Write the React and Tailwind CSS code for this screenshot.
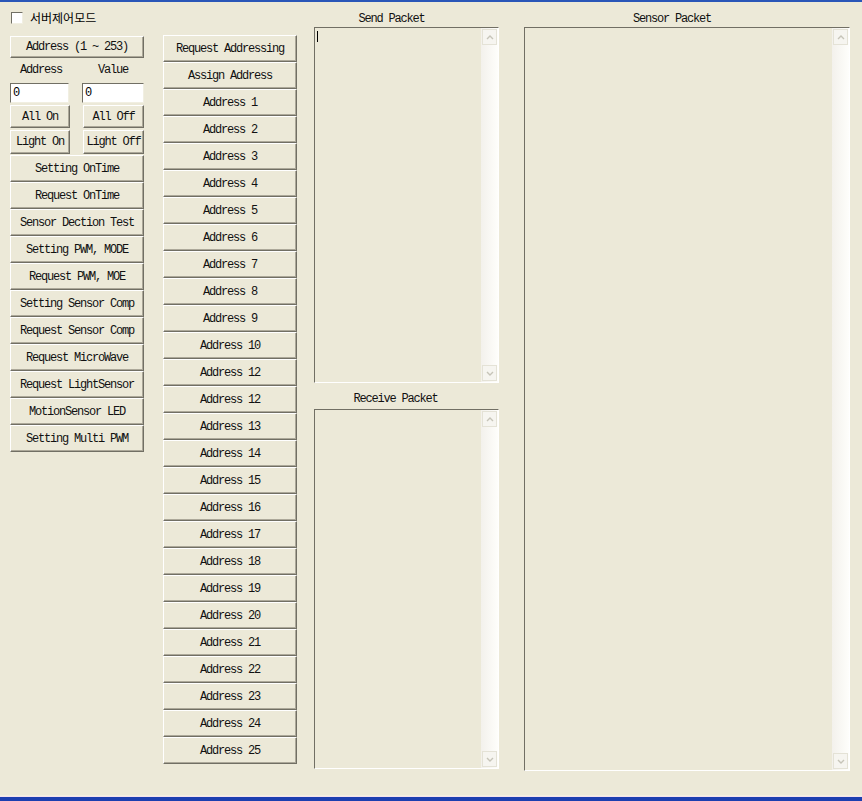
import React from "react";

const font = { fontFamily: '"Liberation Mono", "DejaVu Sans Mono", monospace' };

const Btn = ({ label, h = "h-[27px]", w = "w-full" }) => (
  <button
    className={`${w} ${h} flex items-center justify-center bg-[#ECE9D8] border border-t-white border-l-white border-b-[#716F64] border-r-[#716F64] shadow-[inset_-1px_-1px_0_#ACA899] text-[12px] tracking-[-1.2px] text-[#111] leading-none`}
    style={font}
  >
    {label}
  </button>
);

const Arrow = ({ up }) => (
  <div className="h-[16px] mx-[1px] flex items-center justify-center border border-[#E4E2D6] bg-[#F6F5F0]">
    <svg width="8" height="5" viewBox="0 0 8 5">
      <path
        d={up ? "M1 4 L4 1 L7 4" : "M1 1 L4 4 L7 1"}
        fill="none"
        stroke="#C6C4B8"
        strokeWidth="1.4"
      />
    </svg>
  </div>
);

const ScrollBar = () => (
  <div className="w-[17px] h-full flex flex-col py-[1px] bg-gradient-to-r from-[#F3F1EC] to-[#FEFEFB]">
    <Arrow up />
    <div className="flex-1" />
    <Arrow />
  </div>
);

const TextBox = ({ h, caret }) => (
  <div
    className={`${h} w-full flex border border-t-[#716F64] border-l-[#716F64] border-b-white border-r-white bg-[#ECE9D8]`}
  >
    <div className="flex-1 relative">
      {caret && <div className="absolute left-[2px] top-[3px] w-[1px] h-[11px] bg-black" />}
    </div>
    <ScrollBar />
  </div>
);

const Label = ({ children, className = "" }) => (
  <div
    className={`text-[12px] tracking-[-1.2px] text-[#111] leading-none text-center ${className}`}
    style={font}
  >
    {children}
  </div>
);

const Input = ({ w }) => (
  <div
    className={`${w} h-[20px] bg-white border border-t-[#716F64] border-l-[#716F64] border-b-[#F1EFE2] border-r-[#F1EFE2] flex items-center pl-[2px] text-[12px] leading-none text-black`}
    style={font}
  >
    0
  </div>
);

const App = () => {
  const leftButtons = [
    "Setting OnTime",
    "Request OnTime",
    "Sensor Dection Test",
    "Setting PWM, MODE",
    "Request PWM, MOE",
    "Setting Sensor Comp",
    "Request Sensor Comp",
    "Request MicroWave",
    "Request LightSensor",
    "MotionSensor LED",
    "Setting Multi PWM",
  ];
  const addrNums = [1, 2, 3, 4, 5, 6, 7, 8, 9, 10, 12, 12, 13, 14, 15, 16, 17, 18, 19, 20, 21, 22, 23, 24, 25];

  return (
    <div className="w-[862px] h-[801px] bg-[#ECE9D8] flex flex-col overflow-hidden">
      <div className="h-[2px] bg-[#2A56B8]" />
      <div className="flex-1 flex pl-[10px]">
        {/* left column */}
        <div className="w-[134px] flex flex-col">
          <div className="flex items-center gap-[7px] mt-[10px] ml-[1px] h-[12px]">
            <div className="w-[12px] h-[12px] bg-white border border-t-[#716F64] border-l-[#716F64] border-b-[#F1EFE2] border-r-[#F1EFE2]" />
            <span
              className="text-[12px] leading-none text-black"
              style={{ fontFamily: '"Noto Sans CJK KR", "Noto Sans", sans-serif' }}
            >
              서버제어모드
            </span>
          </div>
          <div className="mt-[12px]">
            <Btn label="Address (1 ~ 253)" h="h-[22px]" />
          </div>
          <div className="flex justify-between mt-[6px] h-[12px]">
            <Label className="w-[62px]">Address</Label>
            <Label className="w-[62px]">Value</Label>
          </div>
          <div className="flex justify-between mt-[7px]">
            <Input w="w-[59px]" />
            <Input w="w-[62px]" />
          </div>
          <div className="flex justify-between mt-[2px]">
            <Btn label="All On" h="h-[23px]" w="w-[60px]" />
            <Btn label="All Off" h="h-[23px]" w="w-[61px]" />
          </div>
          <div className="flex justify-between mt-[2px]">
            <Btn label="Light On" h="h-[24px]" w="w-[60px]" />
            <Btn label="Light Off" h="h-[24px]" w="w-[61px]" />
          </div>
          <div className="flex flex-col mt-[1px]">
            {leftButtons.map((b) => (
              <Btn key={b} label={b} />
            ))}
          </div>
        </div>

        {/* middle column */}
        <div className="w-[134px] ml-[19px] flex flex-col pt-[33px]">
          <Btn label="Request Addressing" />
          <Btn label="Assign Address" />
          {addrNums.map((n, i) => (
            <Btn key={i} label={`Address ${n}`} />
          ))}
        </div>

        {/* send / receive */}
        <div className="w-[185px] ml-[17px] flex flex-col">
          <Label className="mt-[11px] h-[12px] pr-[30px]">Send Packet</Label>
          <div className="mt-[2px]">
            <TextBox h="h-[356px]" caret />
          </div>
          <Label className="mt-[10px] h-[12px] pr-[22px]">Receive Packet</Label>
          <div className="mt-[4px]">
            <TextBox h="h-[360px]" />
          </div>
        </div>

        {/* sensor */}
        <div className="w-[326px] ml-[25px] flex flex-col">
          <Label className="mt-[11px] h-[12px] pr-[30px]">Sensor Packet</Label>
          <div className="mt-[2px]">
            <TextBox h="h-[744px]" />
          </div>
        </div>
      </div>
      <div className="h-[1px] bg-[#F3EFE0]" />
      <div className="h-[1px] bg-[#F4E2EC]" />
      <div className="h-[4px] bg-[#1C3FB0]" />
    </div>
  );
};

export default App;
